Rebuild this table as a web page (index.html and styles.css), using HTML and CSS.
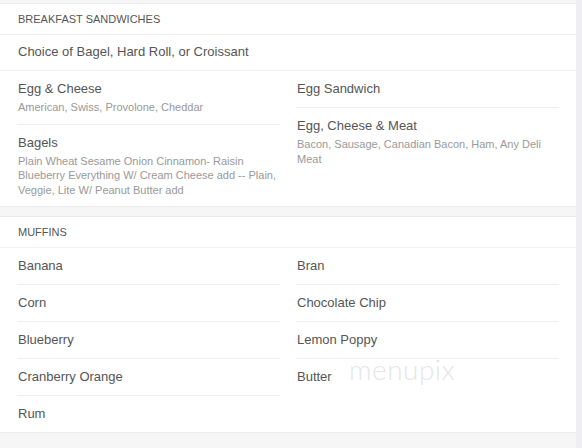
FILE: index.html
```html
<!DOCTYPE html>
<html>
<head>
<meta charset="utf-8">
<link rel="stylesheet" href="styles.css">
</head>
<body>
<div class="page">
  <section class="panel first">
    <div class="sec-head">BREAKFAST SANDWICHES</div>
    <div class="sec-note">Choice of Bagel, Hard Roll, or Croissant</div>
    <div class="cols">
      <div class="col">
        <div class="item">
          <div class="name">Egg &amp; Cheese</div>
          <div class="desc">American, Swiss, Provolone, Cheddar</div>
        </div>
        <div class="item">
          <div class="name">Bagels</div>
          <div class="desc">Plain Wheat Sesame Onion Cinnamon- Raisin Blueberry Everything W/ Cream Cheese add -- Plain, Veggie, Lite W/ Peanut Butter add</div>
        </div>
      </div>
      <div class="col">
        <div class="item">
          <div class="name">Egg Sandwich</div>
        </div>
        <div class="item">
          <div class="name">Egg, Cheese &amp; Meat</div>
          <div class="desc">Bacon, Sausage, Canadian Bacon, Ham, Any Deli Meat</div>
        </div>
      </div>
    </div>
  </section>
  <section class="panel">
    <div class="sec-head">MUFFINS</div>
    <div class="cols">
      <div class="col">
        <div class="item"><div class="name">Banana</div></div>
        <div class="item"><div class="name">Corn</div></div>
        <div class="item"><div class="name">Blueberry</div></div>
        <div class="item"><div class="name">Cranberry Orange</div></div>
        <div class="item"><div class="name">Rum</div></div>
      </div>
      <div class="col">
        <div class="item"><div class="name">Bran</div></div>
        <div class="item"><div class="name">Chocolate Chip</div></div>
        <div class="item"><div class="name">Lemon Poppy</div></div>
        <div class="item"><div class="name">Butter</div></div>
      </div>
    </div>
    <div class="watermark">menupix</div>
  </section>
</div>
</body>
</html>
```
FILE: styles.css
```css
html, body {
  margin: 0;
  padding: 0;
}
body {
  background: #eeeef3;
  font-family: "Liberation Sans", Arial, sans-serif;
  color: #555;
  height: 448px;
  overflow: hidden;
}
.page {
  width: 576px;
  background: #f6f6f6;
  padding-top: 3px;
  padding-bottom: 20px;
  display: flex;
  flex-direction: column;
  gap: 9px;
}
.panel {
  position: relative;
  background: #fff;
  border-top: 1px solid #ebebeb;
  border-bottom: 1px solid #ebebeb;
}
.sec-head {
  font-size: 11px;
  line-height: 14px;
  padding: 8px 17px 8px 18px;
  color: #555;
  border-bottom: 1px solid #efefef;
}
.sec-note {
  font-size: 13px;
  line-height: 17px;
  padding: 8px 18px 10px;
  color: #555;
  border-bottom: 1px solid #efefef;
}
.cols {
  display: grid;
  grid-template-columns: 263px 263px;
  column-gap: 16px;
  padding: 0 17px;
}
.col {
  display: flex;
  flex-direction: column;
}
.item {
  padding: 9px 1px 9px;
  border-top: 1px solid #efefef;
}
.item:first-child {
  border-top: none;
  padding-top: 9px;
}
.name {
  font-size: 13px;
  line-height: 18px;
  color: #555;
}
.desc {
  font-size: 11px;
  line-height: 14.5px;
  color: #999;
  margin-top: 2px;
}
.watermark {
  position: absolute;
  left: 349px;
  top: 135px;
  font-family: "Lato", "DejaVu Sans", sans-serif;
  font-weight: 300;
  font-size: 28px;
  color: #e6e6e6;
  letter-spacing: 0.5px;
  pointer-events: none;
}
```
